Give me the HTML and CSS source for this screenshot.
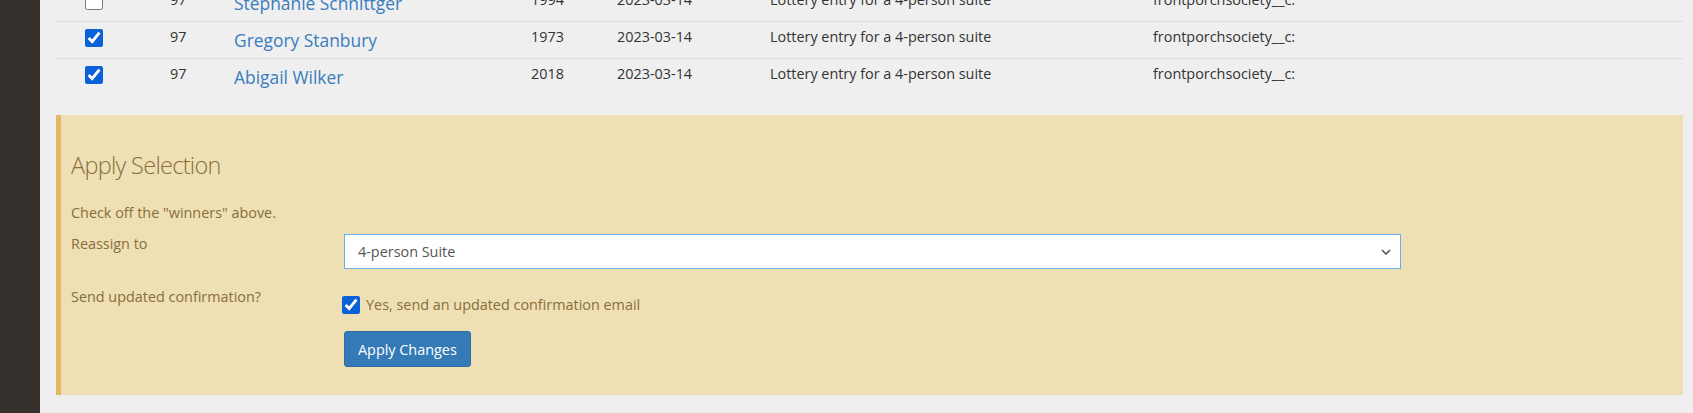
FILE: index.html
```
<!DOCTYPE html>
<html>

<head>
    <meta name="viewport" content="width=device-width, initial-scale=1.0">
    <meta charset="utf-8" />
    <title>Lottery results</title>
    <link rel="stylesheet" href="styles.css">
</head>

<body>
    <div class="sidebar"></div>
    <div class="main">
        <table class="entries">
            <colgroup>
                <col class="c-pick">
                <col class="c-num">
                <col class="c-name">
                <col class="c-year">
                <col class="c-date">
                <col class="c-desc">
                <col>
            </colgroup>
            <tr>
                <td class="pick"><input type="checkbox"></td>
                <td>97</td>
                <td class="name"><a href="#">Stephanie Schnittger</a></td>
                <td>1994</td>
                <td>2023-03-14</td>
                <td>Lottery entry for a 4-person suite</td>
                <td>frontporchsociety__c:</td>
            </tr>
            <tr>
                <td class="pick"><input type="checkbox" checked></td>
                <td>97</td>
                <td class="name"><a href="#">Gregory Stanbury</a></td>
                <td>1973</td>
                <td>2023-03-14</td>
                <td>Lottery entry for a 4-person suite</td>
                <td>frontporchsociety__c:</td>
            </tr>
            <tr>
                <td class="pick"><input type="checkbox" checked></td>
                <td>97</td>
                <td class="name"><a href="#">Abigail Wilker</a></td>
                <td>2018</td>
                <td>2023-03-14</td>
                <td>Lottery entry for a 4-person suite</td>
                <td>frontporchsociety__c:</td>
            </tr>
        </table>

        <div class="callout">
            <h3>Apply Selection</h3>
            <p>Check off the "winners" above.</p>
            <div class="form-row">
                <label for="reassign">Reassign to</label>
                <div class="select-wrap">
                    <select id="reassign">
                        <option>4-person Suite</option>
                        <option>2-person Suite</option>
                        <option>Single</option>
                    </select>
                    <svg class="chevron" width="10" height="6" viewBox="0 0 10 6">
                        <path d="M1 1 L5 5 L9 1" fill="none" stroke="#555" stroke-width="1.6" />
                    </svg>
                </div>
            </div>
            <div class="form-row second">
                <label>Send updated confirmation?</label>
                <div>
                    <div class="check">
                        <input type="checkbox" id="resend" checked>
                        <label for="resend">Yes, send an updated confirmation email</label>
                    </div>
                    <button class="btn">Apply Changes</button>
                </div>
            </div>
        </div>
    </div>
</body>

</html>
```

FILE: styles.css
```
body {
    margin: 0;
    padding: 0;
    background-color: #efefef;
    font-family: "Open Sans", "Noto Sans", sans-serif;
    font-size: 14.4px;
    line-height: 20px;
    color: #333;
    display: flex;
    height: 413px;
    overflow: hidden;
}

.sidebar {
    width: 40px;
    flex: none;
    background: #35302c;
}

.main {
    flex: 1;
    padding: 0 10px 0 16px;
}

/* entries table, scrolled so the first row is cut off */
.entries {
    width: 100%;
    border-collapse: collapse;
    table-layout: fixed;
    margin-top: -16px;
}

.c-pick { width: 106px; }
.c-num { width: 64px; }
.c-name { width: 297px; }
.c-year { width: 86px; }
.c-date { width: 153px; }
.c-desc { width: 383px; }

.entries tr {
    border-top: 1px solid #dcdcdc;
}

.entries td {
    padding: 5px 8px;
    vertical-align: top;
    white-space: nowrap;
}

.entries td.pick {
    padding-left: 29px;
}

.entries td.name {
    font-size: 17.4px;
    line-height: 26px;
}

.entries a {
    color: #3a7dbd;
    text-decoration: none;
}

input[type="checkbox"] {
    width: 18px;
    height: 18px;
    margin: 2px 0 0;
    accent-color: #0b62d8;
}

/* warning panel */
.callout {
    margin-top: 20px;
    background: #eee0b4;
    border-left: 5px solid #e1b665;
    padding: 16px 10px 28px 10px;
    color: #8a6d3b;
}

.callout h3 {
    font-size: 23.5px;
    font-weight: 300;
    line-height: 26px;
    margin: 21px 0 25px;
    letter-spacing: -0.7px;
}

.callout p {
    margin: 0 0 11px;
}

.form-row {
    display: grid;
    grid-template-columns: 273px 1057px;
}

.form-row.second {
    margin-top: 18px;
}

.select-wrap {
    position: relative;
}

.select-wrap select {
    -webkit-appearance: none;
    appearance: none;
    display: block;
    width: 100%;
    height: 35px;
    padding: 0 30px 0 13px;
    background: #fff;
    border: 1px solid #66afe9;
    border-radius: 0;
    font-family: inherit;
    font-size: 14.4px;
    color: #555;
    outline: none;
}

.chevron {
    position: absolute;
    right: 10px;
    top: 15px;
}

.check {
    display: flex;
    align-items: center;
    margin: 8px 0 16px -2px;
}

.check input {
    margin: 0 6px 0 0;
}

.btn {
    display: block;
    height: 36px;
    padding: 0 13px;
    background: #337ab7;
    border: 1px solid #2e6da4;
    border-radius: 3px;
    color: #fff;
    font-family: inherit;
    font-size: 14.4px;
    cursor: pointer;
}
```
